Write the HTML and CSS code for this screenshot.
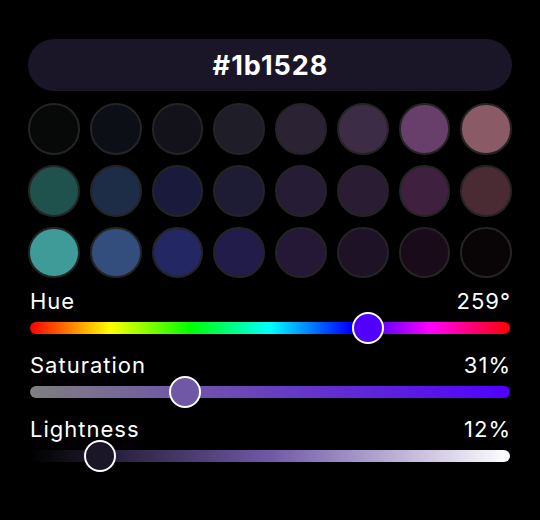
FILE: index.html
```html
<!DOCTYPE html>
<html lang="en">
<head>
<meta charset="utf-8">
<title>Color picker</title>
<link rel="stylesheet" href="styles.css">
</head>
<body>
<div class="picker">
  <div class="hex">#1b1528</div>
  <div class="swatches">
    <span class="sw" style="background:#060908"></span>
    <span class="sw" style="background:#0c1016"></span>
    <span class="sw" style="background:#13121b"></span>
    <span class="sw" style="background:#1e1d28"></span>
    <span class="sw" style="background:#2b2333"></span>
    <span class="sw" style="background:#3d2c45"></span>
    <span class="sw" style="background:#683f6b"></span>
    <span class="sw" style="background:#8a5a66"></span>
    <span class="sw" style="background:#1f514d"></span>
    <span class="sw" style="background:#1d2d48"></span>
    <span class="sw" style="background:#1a1b3c"></span>
    <span class="sw" style="background:#1e1c34"></span>
    <span class="sw" style="background:#271c35"></span>
    <span class="sw" style="background:#2a1c33"></span>
    <span class="sw" style="background:#3f213f"></span>
    <span class="sw" style="background:#4a2b34"></span>
    <span class="sw" style="background:#3f9b97"></span>
    <span class="sw" style="background:#334e7d"></span>
    <span class="sw" style="background:#232764"></span>
    <span class="sw" style="background:#211c4a"></span>
    <span class="sw" style="background:#251736"></span>
    <span class="sw" style="background:#1e1226"></span>
    <span class="sw" style="background:#1a0b1a"></span>
    <span class="sw" style="background:#090405"></span>
  </div>
  <div class="sliders">
    <div class="slider">
      <div class="label"><span>Hue</span><span class="val">259°</span></div>
      <div class="track-area">
        <div class="track hue"></div>
        <span class="thumb thumb-hue" style="left:calc(16px + 0.7194 * (100% - 32px))"></span>
      </div>
    </div>
    <div class="slider">
      <div class="label"><span>Saturation</span><span class="val">31%</span></div>
      <div class="track-area">
        <div class="track sat"></div>
        <span class="thumb thumb-sat" style="left:calc(16px + 0.31 * (100% - 32px))"></span>
      </div>
    </div>
    <div class="slider">
      <div class="label"><span>Lightness</span><span class="val">12%</span></div>
      <div class="track-area">
        <div class="track light"></div>
        <span class="thumb thumb-light" style="left:calc(16px + 0.12 * (100% - 32px))"></span>
      </div>
    </div>
  </div>
</div>
</body>
</html>
```

FILE: styles.css
```css
* { box-sizing: border-box; }
html, body {
  margin: 0;
  background: #000;
}
body {
  font-family: Inter, "Noto Sans", sans-serif;
  color: #fff;
}
.picker {
  width: 484px;
  margin: 39px 0 0 28px;
  display: flex;
  flex-direction: column;
  gap: 12px;
}
.hex {
  height: 52px;
  border-radius: 26px;
  background: #1b1528;
  display: flex;
  align-items: center;
  justify-content: center;
  font-size: 27px;
  font-weight: 700;
  letter-spacing: 1px;
  padding-left: 1px;
}
.swatches {
  display: grid;
  grid-template-columns: repeat(8, 1fr);
  gap: 10px;
}
.sw {
  display: block;
  aspect-ratio: 1 / 1;
  border-radius: 50%;
  border: 2px solid #242424;
}
.sliders {
  display: flex;
  flex-direction: column;
  gap: 10px;
  padding: 0 2px;
}
.label {
  display: flex;
  justify-content: space-between;
  font-size: 22px;
  line-height: 22px;
  letter-spacing: 1px;
}
.val {
  margin-right: -1px;
}
.track-area {
  position: relative;
  height: 32px;
  display: flex;
  align-items: center;
}
.track {
  width: 100%;
  height: 12px;
  border-radius: 6px;
}
.hue {
  background: linear-gradient(to right, #ff0000, #ffff00, #00ff00, #00ffff, #0000ff, #ff00ff, #ff0000);
}
.sat {
  background: linear-gradient(to right, hsl(259, 0%, 50%), hsl(259, 100%, 50%));
}
.light {
  background: linear-gradient(to right, #000, hsl(259, 31%, 50%), #fff);
}
.thumb {
  position: absolute;
  top: 50%;
  width: 32px;
  height: 32px;
  border-radius: 50%;
  border: 2.5px solid #fff;
  transform: translate(-50%, -50%);
}
.thumb-hue { background: hsl(259, 100%, 50%); }
.thumb-sat { background: hsl(259, 31%, 50%); }
.thumb-light { background: #1b1528; }
```
